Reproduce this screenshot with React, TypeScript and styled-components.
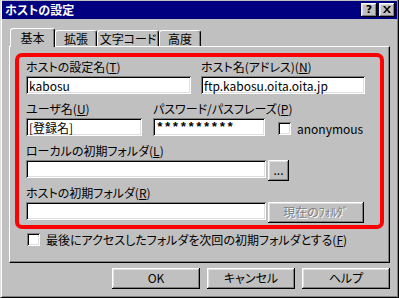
import styled, { createGlobalStyle } from "styled-components";

const font = `"Noto Sans CJK JP", "Noto Sans", sans-serif`;

const GlobalStyle = createGlobalStyle`
  * { box-sizing: border-box; }
  body {
    margin: 0;
    background: #c0c0c0;
    font-family: ${font};
    font-size: 12px;
    font-feature-settings: "palt";
    color: #000;
  }
`;

const raised = `
  box-shadow: inset -1px -1px #000, inset 1px 1px #fff,
    inset -2px -2px #808080, inset 2px 2px #dfdfdf;
`;

const sunken = `
  box-shadow: inset 1px 1px #808080, inset -1px -1px #fff,
    inset 2px 2px #000, inset -2px -2px #dfdfdf;
`;

export default function App() {
  return (
    <>
      <GlobalStyle />
      <Window>
        <TitleBar>
          <Title>ホストの設定</Title>
          <TitleButtons>
            <TitleButton>?</TitleButton>
            <TitleButton>
              <svg width="8" height="7" viewBox="0 0 8 7">
                <path d="M0 0h2l2 2.5L6 0h2L5 3.5 8 7H6L4 4.5 2 7H0l3-3.5z" fill="#000" />
              </svg>
            </TitleButton>
          </TitleButtons>
        </TitleBar>

        <TabRow>
          <Tab $active $width={45}>基本</Tab>
          <Tab $width={42}>拡張</Tab>
          <Tab $width={62}>文字コード</Tab>
          <Tab $width={42}>高度</Tab>
        </TabRow>

        <Panel>
          <Highlight>
            <Row $gap={10}>
              <Field $width={165}>
                <Label>
                  ホストの設定名(<u>T</u>)
                </Label>
                <TextBox readOnly value="kabosu" />
              </Field>
              <Field $width={164}>
                <Label>
                  ホスト名(アドレス)(<u>N</u>)
                </Label>
                <TextBox readOnly value="ftp.kabosu.oita.oita.jp" />
              </Field>
            </Row>

            <Row $gap={11}>
              <Field $width={116}>
                <Label>
                  ユーザ名(<u>U</u>)
                </Label>
                <TextBox readOnly value="[登録名]" />
              </Field>
              <Field $width={112}>
                <Label>
                  パスワード/パスフレーズ(<u>P</u>)
                </Label>
                <TextBox readOnly $masked value="**********" />
              </Field>
              <CheckLine $inset={4} $ml={2}>
                <CheckBox />
                <span>anonymous</span>
              </CheckLine>
            </Row>

            <Row $gap={2}>
              <Field $width={240}>
                <Label>
                  ローカルの初期フォルダ(<u>L</u>)
                </Label>
                <TextBox readOnly value="" />
              </Field>
              <ButtonSlot>
                <Button $width={21} $height={21}>
                  ...
                </Button>
              </ButtonSlot>
            </Row>

            <Row $gap={2}>
              <Field $width={240}>
                <Label>
                  ホストの初期フォルダ(<u>R</u>)
                </Label>
                <TextBox readOnly value="" />
              </Field>
              <ButtonSlot>
                <Button $width={96} $height={21} disabled>
                  現在のﾌｫﾙﾀﾞ
                </Button>
              </ButtonSlot>
            </Row>
          </Highlight>

          <CheckLine $inset={0} $ml={12}>
            <CheckBox />
            <span>
              最後にアクセスしたフォルダを次回の初期フォルダとする(<u>F</u>)
            </span>
          </CheckLine>
        </Panel>

        <ButtonRow>
          <Button $width={88} $height={21}>OK</Button>
          <Button $width={88} $height={21}>キャンセル</Button>
          <Button $width={88} $height={21}>ヘルプ</Button>
        </ButtonRow>
      </Window>
    </>
  );
}

const Window = styled.div`
  width: 399px;
  height: 298px;
  padding: 1px 1px 0 1px;
  background: #c0c0c0;
  border-left: 1px solid #dfdfdf;
  border-right: 1px solid #000;
  border-bottom: 1px solid #000;
  box-shadow: inset 1px 0 #fff, inset -1px -1px #808080;
  display: flex;
  flex-direction: column;
`;

const TitleBar = styled.div`
  height: 18px;
  background: #000080;
  display: flex;
  align-items: center;
  justify-content: space-between;
  padding: 0 2px 0 3px;
`;

const Title = styled.span`
  color: #fff;
  font-weight: bold;
  font-size: 12px;
  line-height: 14px;
`;

const TitleButtons = styled.div`
  display: flex;
  gap: 2px;
`;

const TitleButton = styled.div`
  width: 16px;
  height: 14px;
  background: #c0c0c0;
  ${raised};
  display: flex;
  align-items: center;
  justify-content: center;
  font-family: "DejaVu Sans", sans-serif;
  font-weight: bold;
  font-size: 11px;
  line-height: 14px;
  padding-bottom: 1px;
`;

const TabRow = styled.div`
  display: flex;
  align-items: flex-end;
  height: 18px;
  margin-top: 9px;
  padding-left: 8px;
  position: relative;
  z-index: 1;
`;

const Tab = styled.div<{ $active?: boolean; $width: number }>`
  width: ${(p) => p.$width}px;
  height: ${(p) => (p.$active ? 19 : 16)}px;
  margin-bottom: ${(p) => (p.$active ? -1 : 0)}px;
  background: #c0c0c0;
  border-top: 1px solid #fff;
  border-left: 1px solid #fff;
  border-right: 1px solid #000;
  border-radius: 3px 3px 0 0;
  box-shadow: inset -1px 0 #808080;
  display: flex;
  justify-content: center;
  align-items: ${(p) => (p.$active ? "center" : "flex-start")};
  line-height: 14px;
  padding-top: ${(p) => (p.$active ? 0 : 1)}px;
`;

const Panel = styled.div`
  width: 381px;
  height: 217px;
  margin-left: 7px;
  padding: 6px 0 0 5px;
  border-top: 1px solid #fff;
  border-left: 1px solid #fff;
  border-right: 1px solid #000;
  border-bottom: 1px solid #000;
  box-shadow: inset -1px -1px #808080;
  display: flex;
  flex-direction: column;
  gap: 4px;
`;

const Highlight = styled.div`
  width: 369px;
  border: 4px solid #ff0000;
  border-radius: 7px;
  padding: 3px 0 5px 7px;
  display: flex;
  flex-direction: column;
  gap: 8px;
`;

const Row = styled.div<{ $gap: number }>`
  display: flex;
  height: 34px;
  gap: ${(p) => p.$gap}px;
`;

const Field = styled.div<{ $width: number }>`
  width: ${(p) => p.$width}px;
  display: flex;
  flex-direction: column;
`;

const Label = styled.div`
  height: 16px;
  line-height: 14px;
  white-space: nowrap;
`;

const TextBox = styled.input<{ $masked?: boolean }>`
  width: 100%;
  height: 18px;
  border: 0;
  outline: 0;
  padding: 0 3px;
  margin: 0;
  background: #fff;
  font-family: ${(p) => (p.$masked ? `"Liberation Mono", monospace` : font)};
  font-size: ${(p) => (p.$masked ? 13 : 12)}px;
  font-weight: ${(p) => (p.$masked ? "bold" : "normal")};
  font-feature-settings: "palt";
  color: #000;
  ${sunken};
`;

const ButtonSlot = styled.div`
  padding-top: 16px;
`;

const Button = styled.button<{ $width: number; $height: number }>`
  width: ${(p) => p.$width}px;
  height: ${(p) => p.$height}px;
  border: 0;
  padding: 0 0 2px;
  margin: 0;
  background: #c0c0c0;
  font-family: ${font};
  font-size: 12px;
  font-feature-settings: "palt";
  color: #000;
  line-height: 14px;
  ${raised};

  &:disabled {
    color: #808080;
    text-shadow: 1px 1px #fff;
  }
`;

const CheckLine = styled.div<{ $inset: number; $ml: number }>`
  display: flex;
  align-items: center;
  gap: 6px;
  margin-left: ${(p) => p.$ml}px;
  padding-top: ${(p) => (p.$inset ? 20 : 0)}px;
  height: ${(p) => (p.$inset ? 33 : 13)}px;
  line-height: 14px;
  white-space: nowrap;
`;

const CheckBox = styled.div`
  width: 13px;
  height: 13px;
  flex: none;
  background: #fff;
  ${sunken};
`;

const ButtonRow = styled.div`
  display: flex;
  justify-content: flex-end;
  gap: 7px;
  width: 381px;
  margin: 5px 0 0 7px;
`;
